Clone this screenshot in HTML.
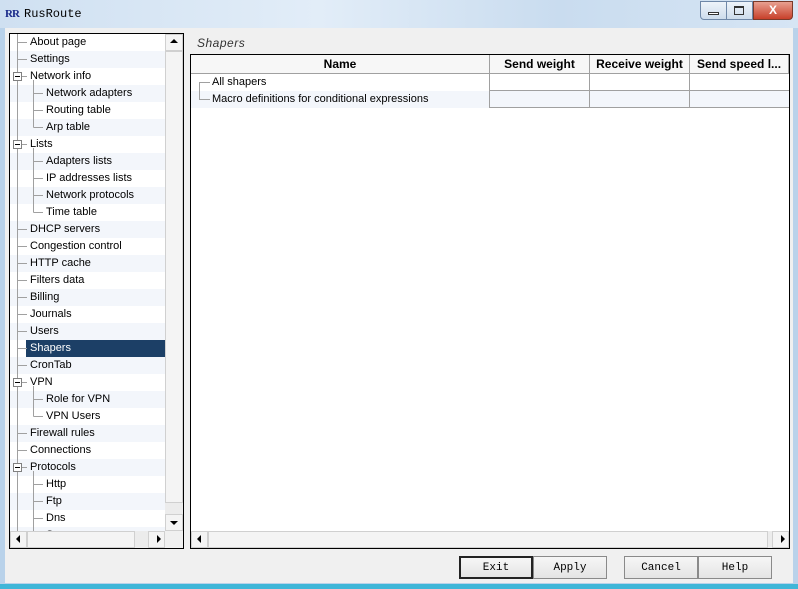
<!DOCTYPE html>
<html><head><style>
*{margin:0;padding:0;box-sizing:border-box}
body{width:798px;height:589px;overflow:hidden;position:relative;background:#b9d2ea;font-family:"Liberation Sans",sans-serif;font-size:11px;color:#000}
.a{position:absolute}
#title{left:0;top:0;width:798px;height:28px;background:linear-gradient(90deg,#cfe0f1 0%,#e2edf8 40%,#c9dcef 70%,#d6e5f4 100%)}
#client{left:5px;top:28px;width:788px;height:555px;background:#f0f0f0}
.row{position:absolute;height:17px;line-height:17px;white-space:nowrap}
.alt{background:#f3f6fb}
.sb{background:#f0f0f0;border:1px solid #d0d0d0}
.btn{position:absolute;top:556px;height:23px;width:74px;background:linear-gradient(#f6f6f6,#e4e4e4);border:1px solid #8a8a8a;font-family:"Liberation Mono",monospace;font-size:11px;text-align:center;line-height:22px}
.hd{position:absolute;top:55px;height:19px;line-height:19px;font-weight:bold;font-size:12px;text-align:center;background:#f7f7f7;border-right:1px solid #a0a0a0;border-bottom:1px solid #a0a0a0}
.arr{position:absolute;width:0;height:0;border:4px solid transparent}
</style></head><body>
<div id="title" class="a"></div>
<div class="a" style="left:5px;top:8px;font-family:'Liberation Serif',serif;font-weight:bold;font-size:11px;color:#1a2a8a;letter-spacing:-1px">RR</div>
<div class="a" style="left:24px;top:7px;font-family:'Liberation Mono',monospace;font-size:12px">RusRoute</div>
<div class="a" style="left:700px;top:1px;width:53px;height:19px;border:1px solid #6f88a8;border-radius:0 0 0 4px;background:linear-gradient(#eef4fa,#cddcec)"></div>
<div class="a" style="left:726px;top:1px;width:1px;height:19px;background:#6f88a8"></div>
<div class="a" style="left:708px;top:12px;width:11px;height:3px;border:1px solid #333;background:#fff"></div>
<div class="a" style="left:734px;top:6px;width:10px;height:9px;border:1px solid #333;border-top-width:2px"></div>
<div class="a" style="left:753px;top:1px;width:40px;height:19px;border:1px solid #7a3a2a;border-radius:0 0 4px 0;background:linear-gradient(#e8a090,#c8402a);color:#fff;font-weight:bold;font-size:12px;text-align:center;line-height:17px">X</div>
<div id="client" class="a"></div>

<div class="a" style="left:9px;top:33px;width:175px;height:516px;border:1px solid #000;background:#fff;overflow:hidden">
<div style="position:absolute;left:0;top:0;width:155px;height:497px;overflow:hidden">
<div class="row" style="top:0;left:0;width:155px"><span style="position:absolute;left:20px">About page</span></div>
<div class="row alt" style="top:17px;left:0;width:155px"><span style="position:absolute;left:20px">Settings</span></div>
<div class="row" style="top:34px;left:0;width:155px"><span style="position:absolute;left:20px">Network info</span></div>
<div class="row alt" style="top:51px;left:0;width:155px"><span style="position:absolute;left:36px">Network adapters</span></div>
<div class="row" style="top:68px;left:0;width:155px"><span style="position:absolute;left:36px">Routing table</span></div>
<div class="row alt" style="top:85px;left:0;width:155px"><span style="position:absolute;left:36px">Arp table</span></div>
<div class="row" style="top:102px;left:0;width:155px"><span style="position:absolute;left:20px">Lists</span></div>
<div class="row alt" style="top:119px;left:0;width:155px"><span style="position:absolute;left:36px">Adapters lists</span></div>
<div class="row" style="top:136px;left:0;width:155px"><span style="position:absolute;left:36px">IP addresses lists</span></div>
<div class="row alt" style="top:153px;left:0;width:155px"><span style="position:absolute;left:36px">Network protocols</span></div>
<div class="row" style="top:170px;left:0;width:155px"><span style="position:absolute;left:36px">Time table</span></div>
<div class="row alt" style="top:187px;left:0;width:155px"><span style="position:absolute;left:20px">DHCP servers</span></div>
<div class="row" style="top:204px;left:0;width:155px"><span style="position:absolute;left:20px">Congestion control</span></div>
<div class="row alt" style="top:221px;left:0;width:155px"><span style="position:absolute;left:20px">HTTP cache</span></div>
<div class="row" style="top:238px;left:0;width:155px"><span style="position:absolute;left:20px">Filters data</span></div>
<div class="row alt" style="top:255px;left:0;width:155px"><span style="position:absolute;left:20px">Billing</span></div>
<div class="row" style="top:272px;left:0;width:155px"><span style="position:absolute;left:20px">Journals</span></div>
<div class="row alt" style="top:289px;left:0;width:155px"><span style="position:absolute;left:20px">Users</span></div>
<div class="row" style="top:306px;left:16px;width:140px;background:#1c3f66;color:#fff"><span style="position:absolute;left:4px">Shapers</span></div>
<div class="row alt" style="top:323px;left:0;width:155px"><span style="position:absolute;left:20px">CronTab</span></div>
<div class="row" style="top:340px;left:0;width:155px"><span style="position:absolute;left:20px">VPN</span></div>
<div class="row alt" style="top:357px;left:0;width:155px"><span style="position:absolute;left:36px">Role for VPN</span></div>
<div class="row" style="top:374px;left:0;width:155px"><span style="position:absolute;left:36px">VPN Users</span></div>
<div class="row alt" style="top:391px;left:0;width:155px"><span style="position:absolute;left:20px">Firewall rules</span></div>
<div class="row" style="top:408px;left:0;width:155px"><span style="position:absolute;left:20px">Connections</span></div>
<div class="row alt" style="top:425px;left:0;width:155px"><span style="position:absolute;left:20px">Protocols</span></div>
<div class="row" style="top:442px;left:0;width:155px"><span style="position:absolute;left:36px">Http</span></div>
<div class="row alt" style="top:459px;left:0;width:155px"><span style="position:absolute;left:36px">Ftp</span></div>
<div class="row" style="top:476px;left:0;width:155px"><span style="position:absolute;left:36px">Dns</span></div>
<div class="row alt" style="top:493px;left:0;width:155px"><span style="position:absolute;left:36px">S</span></div>
<svg width="155" height="497" style="position:absolute;left:0;top:0" stroke="#a0a0a0" stroke-width="1" fill="none" shape-rendering="crispEdges">
<path d="M7.5 0V497M7.5 8.5H17M7.5 25.5H17M7.5 42.5H17M7.5 110.5H17M7.5 195.5H17M7.5 212.5H17M7.5 229.5H17M7.5 246.5H17M7.5 263.5H17M7.5 280.5H17M7.5 297.5H17M7.5 314.5H17M7.5 331.5H17M7.5 348.5H17M7.5 399.5H17M7.5 416.5H17M7.5 433.5H17"/>
<path d="M23.5 46V93.5M23.5 59.5H33M23.5 76.5H33M23.5 93.5H33M23.5 114V178.5M23.5 127.5H33M23.5 144.5H33M23.5 161.5H33M23.5 178.5H33M23.5 352V382.5M23.5 365.5H33M23.5 382.5H33M23.5 437V497M23.5 450.5H33M23.5 467.5H33M23.5 484.5H33"/>
<g fill="#fff" stroke="#808080"><rect x="3.5" y="38.5" width="8" height="8"/><rect x="3.5" y="106.5" width="8" height="8"/><rect x="3.5" y="344.5" width="8" height="8"/><rect x="3.5" y="429.5" width="8" height="8"/></g>
<path stroke="#000" d="M5 42.5H10M5 110.5H10M5 348.5H10M5 433.5H10"/>
</svg>
</div>
<div class="a" style="left:155px;top:0;width:18px;height:497px;background:#ececec"></div>
<div class="a sb" style="left:155px;top:0;width:18px;height:17px;background:#f4f4f4"></div>
<div class="arr" style="left:160px;top:1px;border-bottom-color:#000"></div>
<div class="a sb" style="left:155px;top:17px;width:18px;height:452px;background:#f4f4f4"></div>
<div class="a sb" style="left:155px;top:480px;width:18px;height:17px;background:#f4f4f4"></div>
<div class="arr" style="left:160px;top:487px;border-top-color:#000"></div>
<div class="a" style="left:0;top:497px;width:155px;height:17px;background:#ececec"></div>
<div class="a sb" style="left:0;top:497px;width:17px;height:17px;background:#f4f4f4"></div>
<div class="arr" style="left:2px;top:501px;border-right-color:#000"></div>
<div class="a sb" style="left:17px;top:497px;width:108px;height:17px;background:#f4f4f4"></div>
<div class="a sb" style="left:138px;top:497px;width:17px;height:17px;background:#f4f4f4"></div>
<div class="arr" style="left:147px;top:501px;border-left-color:#000"></div>
<div class="a" style="left:155px;top:497px;width:18px;height:17px;background:#f0f0f0"></div>
</div>

<div class="a" style="left:197px;top:36px;font-size:12px;font-style:italic;color:#333;letter-spacing:0.5px">Shapers</div>
<div class="a" style="left:190px;top:54px;width:600px;height:495px;border:1px solid #000;background:#fff"></div>
<div class="hd" style="left:191px;width:299px">Name</div>
<div class="hd" style="left:490px;width:100px">Send weight</div>
<div class="hd" style="left:590px;width:100px">Receive weight</div>
<div class="hd" style="left:690px;width:99px;text-align:left;padding-left:7px">Send speed l...</div>
<div class="a alt" style="left:191px;top:91px;width:598px;height:17px"></div>
<div class="a" style="left:489px;top:74px;width:300px;height:34px;border-left:1px solid #a0a0a0;border-bottom:1px solid #a0a0a0"></div>
<div class="a" style="left:589px;top:74px;width:1px;height:34px;background:#a0a0a0"></div>
<div class="a" style="left:689px;top:74px;width:1px;height:34px;background:#a0a0a0"></div>
<div class="a" style="left:489px;top:90px;width:300px;height:1px;background:#a0a0a0"></div>
<svg class="a" style="left:191px;top:74px" width="20" height="34" stroke="#a0a0a0" fill="none" shape-rendering="crispEdges"><path d="M8.5 8V25.5H19M8.5 8.5H19"/></svg>
<div class="a" style="left:212px;top:74px;line-height:16px">All shapers</div>
<div class="a" style="left:212px;top:91px;line-height:16px">Macro definitions for conditional expressions</div>
<div class="a" style="left:191px;top:531px;width:598px;height:17px;background:#ececec"></div>
<div class="a sb" style="left:191px;top:531px;width:17px;height:17px;background:#f4f4f4"></div>
<div class="arr" style="left:193px;top:535px;border-right-color:#000"></div>
<div class="a sb" style="left:208px;top:531px;width:560px;height:17px;background:#f4f4f4"></div>
<div class="a sb" style="left:772px;top:531px;width:17px;height:17px;background:#f4f4f4"></div>
<div class="arr" style="left:781px;top:535px;border-left-color:#000"></div>

<div class="btn" style="left:459px;border:2px solid #222;line-height:20px">Exit</div>
<div class="btn" style="left:533px">Apply</div>
<div class="btn" style="left:624px">Cancel</div>
<div class="btn" style="left:698px">Help</div>
<div class="a" style="left:0;top:584px;width:798px;height:5px;background:#3fb6d8"></div>
</body></html>
